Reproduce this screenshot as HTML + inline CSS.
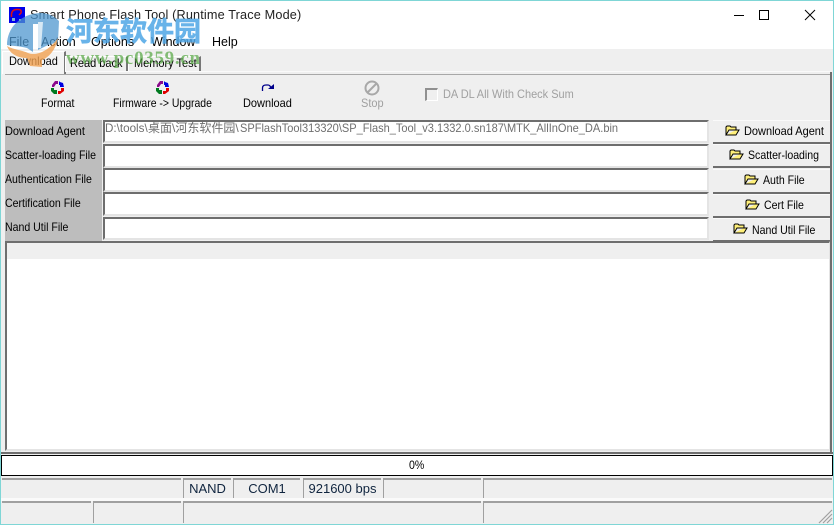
<!DOCTYPE html>
<html><head><meta charset="utf-8"><style>
html,body{margin:0;padding:0;width:834px;height:525px;overflow:hidden;background:#fff}
body{position:relative;font-family:"Liberation Sans","Noto Sans CJK SC",sans-serif;font-size:12px;color:#000}
.a{position:absolute}
.t{position:absolute;white-space:nowrap;line-height:14px}
.x{transform:scaleX(.915);transform-origin:0 50%}
.y{transform:scaleX(.88);transform-origin:0 50%}
.inp{position:absolute;left:103px;width:602px;background:#fff;border-top:2px solid #6e6e6e;border-left:2px solid #6e6e6e;border-right:2px solid #e4e4e4;border-bottom:2px solid #e4e4e4}
.btn{position:absolute;left:713px;width:117px;background:#efefef;border-top:1px solid #fafafa;border-bottom:2px solid #6e6e6e;box-sizing:border-box}
.btn span{position:absolute;white-space:nowrap;line-height:14px;font-size:12px}
.btn svg{position:absolute;top:4px}
.c{position:absolute;background:#efefef;border-top:2px solid #a0a0a0;border-left:1px solid #a0a0a0;box-sizing:border-box;text-align:center;font-size:13px;color:#10253f;line-height:18px}
.l{left:5px}
.m{font-size:12.5px;top:35px}
</style></head><body>
<div class="a" style="left:0;top:0;width:834px;height:525px;background:#fff"></div>

<!-- title bar -->
<svg class="a" style="left:9px;top:7px" width="16" height="16" viewBox="0 0 16 16"><rect width="16" height="16" fill="#0000e8"/><path d="M2.500 10V7Q3 3 7 2.500H10Q13 3 12 6L10 8" fill="none" stroke="#e01010" stroke-width="1.500"/><rect x="3" y="11" width="3" height="3" fill="#7fb0d0"/><rect x="10" y="12" width="2" height="2" fill="#7fb0d0"/></svg>
<div class="t" style="left:30px;top:8px;font-size:12.700px;letter-spacing:.15px;color:#222">Smart Phone Flash Tool (Runtime Trace Mode)</div>
<svg class="a" style="left:700px;top:0" width="134" height="30" viewBox="0 0 134 30"><path d="M34 15.500H44" stroke="#000" stroke-width="1"/><rect x="59.500" y="10.500" width="9" height="9" fill="none" stroke="#000"/><path d="M105 10L115 20M115 10L105 20" stroke="#000" stroke-width="1"/></svg>

<!-- menu -->
<div class="t m" style="left:9px">File</div>
<div class="t m" style="left:41px">Action</div>
<div class="t m" style="left:91px">Options</div>
<div class="t m" style="left:151px">Window</div>
<div class="t m" style="left:212px">Help</div>

<!-- client -->
<div class="a" style="left:1px;top:49px;width:832px;height:475px;background:#efefef"></div>

<!-- tabs -->
<div class="a" style="left:2px;top:51px;width:61px;height:22px;background:#f4f4f4;border-top:1px solid #fff;border-left:1px solid #fff;border-right:2px solid #777"></div>
<div class="t x" style="left:9px;top:54px">Download</div>
<div class="a" style="left:65px;top:56px;width:60px;height:15px;border-top:1px solid #fff;border-left:1px solid #fff;border-right:2px solid #777"></div>
<div class="t x" style="left:70px;top:56px">Read back</div>
<div class="a" style="left:128px;top:56px;width:70px;height:15px;border-top:1px solid #fff;border-left:1px solid #fff;border-right:2px solid #777"></div>
<div class="t x" style="left:134px;top:56px">Memory Test</div>
<div class="a" style="left:65px;top:71px;width:765px;height:1px;background:#fafafa"></div>
<div class="a" style="left:5px;top:74px;width:825px;height:1px;background:#a8a8a8"></div>
<div class="a" style="left:830px;top:72px;width:2px;height:380px;background:#6e6e6e"></div>

<!-- toolbar -->
<svg class="a" style="left:51px;top:81px" width="13" height="13" viewBox="0 0 13 13"><path d="M1 4L4 0H7V3H5L3 6H1Z" fill="#8b0a8b"/><path d="M8 0L9 1L12 2L13 6H9V4H8Z" fill="#0000e0"/><path d="M13 7V10L9 13H7V10H10V7Z" fill="#e00000"/><path d="M0 7H3V9H6V13H3L0 10Z" fill="#007a20"/></svg>
<div class="t y" style="left:41px;top:96px">Format</div>
<svg class="a" style="left:156px;top:81px" width="13" height="13" viewBox="0 0 13 13"><path d="M1 4L4 0H7V3H5L3 6H1Z" fill="#8b0a8b"/><path d="M8 0L9 1L12 2L13 6H9V4H8Z" fill="#0000e0"/><path d="M13 7V10L9 13H7V10H10V7Z" fill="#e00000"/><path d="M0 7H3V9H6V13H3L0 10Z" fill="#007a20"/></svg>
<div class="t" style="left:113px;top:96px;transform:scaleX(.87);transform-origin:0 50%">Firmware -&gt; Upgrade</div>
<svg class="a" style="left:261px;top:83px" width="13" height="10" viewBox="0 0 13 10"><path d="M1.500 8V5Q1.500 2 5 2H7Q9 2 10 5" fill="none" stroke="#00008b" stroke-width="1.300"/><path d="M7 6H13V1Z" fill="#00008b"/></svg>
<div class="t x" style="left:243px;top:96px">Download</div>
<svg class="a" style="left:364px;top:80px" width="16" height="16" viewBox="0 0 16 16"><circle cx="8" cy="8" r="6.500" fill="none" stroke="#a8a8a8" stroke-width="2"/><path d="M3.500 12.500L12.500 3.500" stroke="#a8a8a8" stroke-width="2"/></svg>
<div class="t x" style="left:361px;top:96px;color:#a0a0a0">Stop</div>
<div class="a" style="left:425px;top:88px;width:10px;height:10px;border-top:2px solid #909090;border-left:2px solid #909090;border-right:1px solid #fff;border-bottom:1px solid #fff"></div>
<div class="t x" style="left:443px;top:87px;color:#a0a0a0">DA DL All With Check Sum</div>

<!-- labels -->
<div class="a" style="left:5px;top:120px;width:97px;height:121px;background:#bdbdbd"></div>
<div class="t l x" style="top:124px">Download Agent</div>
<div class="t l y" style="top:148px">Scatter-loading File</div>
<div class="t l y" style="top:172px">Authentication File</div>
<div class="t l y" style="top:196px">Certification File</div>
<div class="t l y" style="top:220px">Nand Util File</div>

<!-- inputs -->
<div class="inp" style="top:120px;height:19px"></div>
<div class="t" style="left:105px;top:121px;color:#707070;transform:scaleX(.97);transform-origin:0 50%">D:\tools\</div>
<div class="t" style="left:148px;top:121px;color:#707070">桌面\河东软件园\</div>
<div class="t" style="left:240px;top:121px;color:#707070;transform:scaleX(.92);transform-origin:0 50%">SPFlashTool313320\SP_Flash_Tool_v3.1332.0.sn187\MTK_AllInOne_DA.bin</div>
<div class="inp" style="top:144px;height:20px"></div>
<div class="inp" style="top:168px;height:20px"></div>
<div class="inp" style="top:192px;height:20px"></div>
<div class="inp" style="top:217px;height:19px"></div>

<!-- buttons -->
<div class="btn" style="top:120px;height:24px"><svg style="left:12px" width="15" height="12" viewBox="0 0 15 12"><path d="M1 10V2L2 1H5L6 2H11V5H4L1 10H11L14 5H11" fill="#fff07a" stroke="#000" stroke-width="1"/></svg><span class="x" style="left:31px;top:3px">Download Agent</span></div>
<div class="btn" style="top:144px;height:24px"><svg style="left:16px" width="15" height="12" viewBox="0 0 15 12"><path d="M1 10V2L2 1H5L6 2H11V5H4L1 10H11L14 5H11" fill="#fff07a" stroke="#000" stroke-width="1"/></svg><span class="y" style="left:35px;top:3px">Scatter-loading</span></div>
<div class="btn" style="top:169px;height:25px"><svg style="left:31px" width="15" height="12" viewBox="0 0 15 12"><path d="M1 10V2L2 1H5L6 2H11V5H4L1 10H11L14 5H11" fill="#fff07a" stroke="#000" stroke-width="1"/></svg><span class="y" style="left:50px;top:3px">Auth File</span></div>
<div class="btn" style="top:194px;height:24px"><svg style="left:32px" width="15" height="12" viewBox="0 0 15 12"><path d="M1 10V2L2 1H5L6 2H11V5H4L1 10H11L14 5H11" fill="#fff07a" stroke="#000" stroke-width="1"/></svg><span class="y" style="left:51px;top:3px">Cert File</span></div>
<div class="btn" style="top:218px;height:24px"><svg style="left:20px" width="15" height="12" viewBox="0 0 15 12"><path d="M1 10V2L2 1H5L6 2H11V5H4L1 10H11L14 5H11" fill="#fff07a" stroke="#000" stroke-width="1"/></svg><span class="y" style="left:39px;top:4px">Nand Util File</span></div>

<!-- log area -->
<div class="a" style="left:5px;top:241px;width:825px;height:210px;background:#fff;box-sizing:border-box;border-top:2px solid #6e6e6e;border-left:2px solid #6e6e6e;border-right:1px solid #e4e4e4;border-bottom:2px solid #e4e4e4"></div>
<div class="a" style="left:7px;top:243px;width:822px;height:16px;background:#efefef"></div>
<div class="a" style="left:1px;top:452px;width:832px;height:2px;background:#6e6e6e"></div>

<!-- progress -->
<div class="a" style="left:1px;top:455px;width:832px;height:21px;background:#fff;border:1px solid #000;box-sizing:border-box"></div>
<div class="t y" style="left:409px;top:458px">0%</div>

<!-- status -->
<div class="c" style="left:2px;top:478px;width:179px;height:20px;border-left:none"></div>
<div class="c" style="left:183px;top:478px;width:48px;height:20px">NAND</div>
<div class="c" style="left:233px;top:478px;width:67px;height:20px">COM1</div>
<div class="c" style="left:303px;top:478px;width:78px;height:20px">921600 bps</div>
<div class="c" style="left:383px;top:478px;width:98px;height:20px"></div>
<div class="c" style="left:483px;top:478px;width:349px;height:20px"></div>
<div class="a" style="left:1px;top:498px;width:832px;height:3px;background:#fafafa"></div>
<div class="c" style="left:2px;top:501px;width:89px;height:22px;border-left:none"></div>
<div class="c" style="left:93px;top:501px;width:88px;height:22px"></div>
<div class="c" style="left:183px;top:501px;width:298px;height:22px"></div>
<div class="c" style="left:483px;top:501px;width:349px;height:22px"></div>
<svg class="a" style="left:818px;top:509px" width="15" height="15" viewBox="0 0 15 15"><path d="M1 14L14 1M5 14L14 5M9 14L14 9" stroke="#a0a0a0" stroke-width="1.200"/></svg>

<!-- watermark -->
<svg class="a" style="left:0;top:0" width="70" height="70" viewBox="0 0 70 70"><path d="M7 45C7 28 20 14 40 13C48 13 54 16 59 21L58 42L48 45L38 50L38 24L33 24L33 52L27 48C20 46 12 46 7 45Z" fill="#4f97cf" opacity=".75"/><path d="M38 22H43L41 48H38Z" fill="#fff" opacity=".7"/><path d="M7 46C14 50 22 50 28 53C36 56 48 52 58 38C56 50 48 58 42 60L42 67L30 66L27 58C18 58 10 54 7 46Z" fill="#f0a050" opacity=".8"/></svg>
<div class="t" style="left:66px;top:14px;font-size:27px;line-height:32px;font-weight:bold;color:#4ea6e6;opacity:.85;font-family:'Noto Sans CJK SC',sans-serif;-webkit-text-stroke:.6px #4ea6e6">河东软件园</div>
<div class="t" style="left:66px;top:49px;font-size:19px;line-height:20px;font-weight:bold;color:#58a846;opacity:.72;font-family:'Liberation Serif',serif;letter-spacing:.7px">www.pc0359.cn</div>

<!-- window frame -->
<div class="a" style="left:0;top:0;width:834px;height:525px;box-sizing:border-box;border:1px solid #7fd6d6"></div>
</body></html>
